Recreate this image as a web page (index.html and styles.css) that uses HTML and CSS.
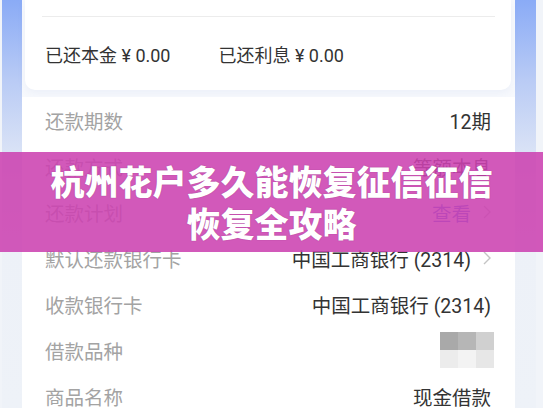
FILE: index.html
```html
<!DOCTYPE html>
<html lang="zh-CN">

<head>
    <meta charset="UTF-8">
    <meta name="viewport" content="width=device-width, initial-scale=1.0">
    <title>杭州花户多久能恢复征信</title>
    <link rel="stylesheet" href="styles.css">
</head>

<body>
    <div class="device">
        <div class="screen">
            <div class="panel">
                <div class="repaid-card">
                    <div class="divider"></div>
                    <div class="repaid-row">
                        <span>已还本金 ¥ 0.00</span>
                        <span>已还利息 ¥ 0.00</span>
                    </div>
                </div>

                <ul class="detail-list">
                    <li><span class="label">还款期数</span><span class="value">12期</span></li>
                    <li><span class="label">还款方式</span><span class="value">等额本息</span></li>
                    <li>
                        <span class="label">还款计划</span>
                        <span class="value link">查看
                            <svg class="chevron" width="8" height="14" viewBox="0 0 8 14"><polyline points="1,1 7,7 1,13" /></svg>
                        </span>
                    </li>
                    <li>
                        <span class="label">默认还款银行卡</span>
                        <span class="value">中国工商银行 (2314)
                            <svg class="chevron" width="8" height="14" viewBox="0 0 8 14"><polyline points="1,1 7,7 1,13" /></svg>
                        </span>
                    </li>
                    <li><span class="label">收款银行卡</span><span class="value">中国工商银行 (2314)</span></li>
                    <li>
                        <span class="label">借款品种</span>
                        <span class="mosaic">
                            <i class="m1"></i><i class="m2"></i><i class="m3"></i>
                            <i class="m4"></i><i class="m5"></i><i class="m6"></i>
                        </span>
                    </li>
                    <li><span class="label">商品名称</span><span class="value">现金借款</span></li>
                </ul>
            </div>
        </div>

        <div class="banner">
            <h1>杭州花户多久能恢复征信征信<br>恢复全攻略</h1>
        </div>
    </div>
</body>

</html>
```

FILE: styles.css
```css
body {
    margin: 0;
    background-color: #f1f4f9;
    font-family: Roboto, "Noto Sans CJK SC", sans-serif;
    color: #333;
}

.device {
    position: relative;
    display: flex;
    width: 543px;
    height: 408px;
    overflow: hidden;
    padding: 0 7px 0 2px;
    box-sizing: border-box;
}

.screen {
    flex: 1;
    padding: 0 21px 0 20px;
    background: linear-gradient(to bottom, #8aabf6 0px, #b9cbf5 80px, #dde5f6 160px, #edf1f8 240px, #eef2f8 408px);
}

.panel {
    height: 100%;
    background: #f7f9fd;
    padding: 0 4px 0 3px;
}

/* top card with repaid amounts */
.repaid-card {
    height: 90px;
    background: #fff;
    border-radius: 0 0 10px 10px;
    box-shadow: 0 3px 8px rgba(80, 110, 180, 0.07);
}

.divider {
    height: 16px;
    margin: 0 16px 0 17px;
    border-bottom: 1px solid #ececec;
}

.repaid-row {
    display: flex;
    gap: 48px;
    padding: 28px 0 0 20px;
    font-size: 18px;
    line-height: 22px;
    color: #333;
}

/* detail rows */
.detail-list {
    list-style: none;
    margin: 7px -4px 0 -3px;
    padding: 0;
    background: #fff;
}

.detail-list li {
    display: flex;
    justify-content: space-between;
    align-items: center;
    height: 46px;
    padding: 0 24px 0 23px;
    font-size: 19.5px;
}

.detail-list .label {
    color: #a3a3a3;
}

.detail-list .value {
    display: flex;
    align-items: center;
    color: #333;
}

.detail-list .value.link {
    color: #4d6fe8;
}

.chevron {
    margin-left: 12px;
    fill: none;
    stroke: #c4c4c4;
    stroke-width: 1.4;
}

.mosaic {
    display: grid;
    grid-template-columns: repeat(3, 18px);
    grid-template-rows: repeat(2, 18px);
    margin-right: -3px;
}

.mosaic .m1 { background: #a9a9a9; }
.mosaic .m2 { background: #b6b6b6; }
.mosaic .m3 { background: #d0d0d0; }
.mosaic .m4 { background: #ececec; }
.mosaic .m5 { background: #f3f3f3; }
.mosaic .m6 { background: #e7e7e7; }

/* title overlay */
.banner {
    position: absolute;
    left: 0;
    right: 0;
    top: 152px;
    height: 100px;
    display: flex;
    align-items: center;
    justify-content: center;
    background: rgba(204, 66, 176, 0.88);
}

.banner h1 {
    margin: 0;
    text-align: center;
    font-family: "Noto Sans CJK SC", sans-serif;
    font-weight: 900;
    font-size: 34px;
    line-height: 42px;
    color: #fff;
    text-shadow: 0 0 1px rgba(90, 20, 80, 0.5);
}
```
